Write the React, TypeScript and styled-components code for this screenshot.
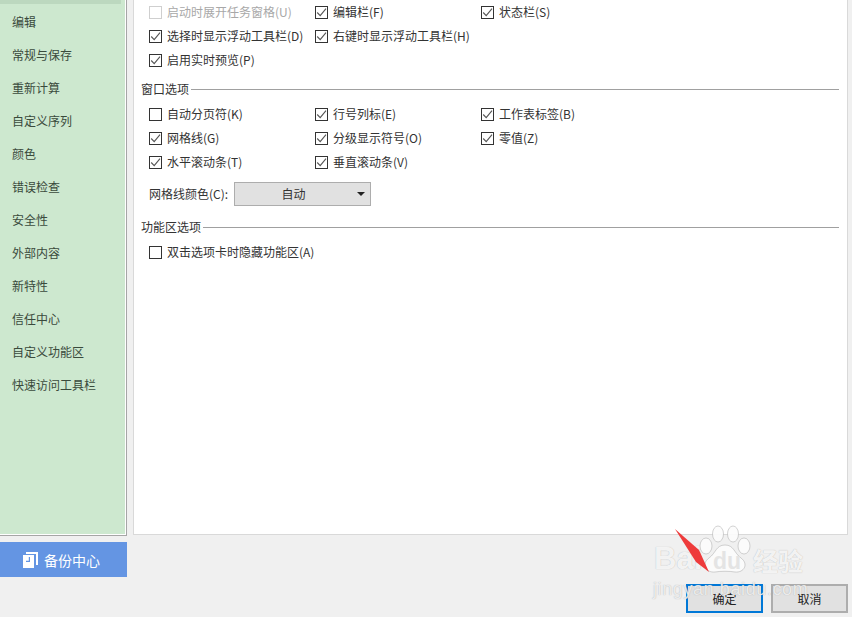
import React from "react";
import styled, { createGlobalStyle } from "styled-components";

const Global = createGlobalStyle`
  html, body { margin: 0; padding: 0; background: #f0f0f0; }
  body { font-family: "Noto Sans CJK SC", "Liberation Sans", sans-serif; font-size: 12px; line-height: 16px; color: #333; }
`;

const Page = styled.div`
  position: relative;
  width: 852px;
  height: 617px;
  overflow: hidden;
  display: flex;
  flex-direction: column;
`;
const Top = styled.div`
  display: flex;
  height: 536px;
  gap: 6px;
  padding-right: 4px;
`;
const Sidebar = styled.nav`
  box-sizing: border-box;
  width: 127px;
  background: #cde8cf;
  border-right: 1px solid #a6a6a6;
  border-bottom: 1px solid #a6a6a6;
  box-shadow: inset -1px -1px 0 #fff;
  display: flex;
  flex-direction: column;
`;
const ActiveStub = styled.div`
  height: 4px;
  margin: 0 5px 1px 0;
  background: #bcd8bf;
`;
const NavItem = styled.div`
  height: 33px;
  line-height: 33px;
  padding-left: 12px;
  color: #3a4a3c;
`;
const Main = styled.main`
  flex: 1;
  box-sizing: border-box;
  height: 535px;
  background: #fff;
  border: 1px solid #d9d9d9;
  border-top: 0;
  padding: 0 8px 0 7px;
`;
const Row = styled.div`
  display: grid;
  grid-template-columns: repeat(3, 166px);
  height: 24px;
  padding-left: 8px;
  align-items: center;
`;
const CheckLabel = styled.label<{ $disabled?: boolean }>`
  display: flex;
  align-items: center;
  gap: 5px;
  white-space: nowrap;
  color: ${(p) => (p.$disabled ? "#a8a8a8" : "#333")};
`;
const Box = styled.span<{ $disabled?: boolean }>`
  box-sizing: border-box;
  width: 13px;
  height: 13px;
  flex: none;
  background: #fff;
  border: 1px solid ${(p) => (p.$disabled ? "#cfcfcf" : "#333")};
  display: flex;
`;
const Section = styled.div<{ $top: number }>`
  display: flex;
  align-items: center;
  gap: 2px;
  height: 18px;
  margin-top: ${(p) => p.$top}px;
  margin-bottom: 4px;
  white-space: nowrap;
  &::after {
    content: "";
    flex: 1;
    height: 1px;
    background: #a0a0a0;
  }
`;
const ColorRow = styled.div`
  display: flex;
  align-items: center;
  gap: 6px;
  height: 24px;
  padding-left: 8px;
  margin-top: 8px;
`;
const Select = styled.div`
  position: relative;
  box-sizing: border-box;
  width: 137px;
  height: 24px;
  line-height: 22px;
  text-align: center;
  background: #e1e1e1;
  border: 1px solid #adadad;
  padding-right: 18px;
  &::after {
    content: "";
    position: absolute;
    right: 5px;
    top: 9px;
    border-left: 4px solid transparent;
    border-right: 4px solid transparent;
    border-top: 4px solid #222;
  }
`;
const Bottom = styled.div`
  position: relative;
  flex: 1;
  display: flex;
  justify-content: space-between;
  align-items: flex-start;
  padding: 6px 4px 0 0;
`;
const Backup = styled.div`
  width: 127px;
  height: 35px;
  background: #6495e3;
  color: #fff;
  font-size: 14px;
  display: flex;
  align-items: center;
  gap: 6px;
  padding-left: 23px;
  box-sizing: border-box;
`;
const Buttons = styled.div`
  display: flex;
  gap: 8px;
  margin-top: 42px;
`;
const Button = styled.div<{ $primary?: boolean }>`
  box-sizing: border-box;
  width: 77px;
  height: 29px;
  line-height: 25px;
  text-align: center;
  background: #e1e1e1;
  color: #222;
  border: 2px solid ${(p) => (p.$primary ? "#0078d7" : "#adadad")};
`;
const Watermark = styled.div`
  position: absolute;
  left: 650px;
  top: 524px;
  width: 170px;
  height: 80px;
  pointer-events: none;
  font-family: "Liberation Sans", sans-serif;
`;
const WmBaidu = styled.span`
  position: absolute;
  left: 4px;
  top: 17px;
  font-size: 31px;
  font-weight: 700;
  line-height: 36px;
  color: rgba(252, 252, 252, 0.9);
  text-shadow: 0 0 1px rgba(160, 160, 160, 0.8);
`;
const WmDu = styled.span`
  position: absolute;
  left: 63px;
  top: 24px;
  font-size: 23px;
  font-weight: 700;
  line-height: 26px;
  color: #e4e4e4;
`;
const WmCn = styled.span`
  position: absolute;
  left: 103px;
  top: 20px;
  font-family: "Noto Sans CJK SC", sans-serif;
  font-size: 25px;
  line-height: 32px;
  font-weight: 700;
  color: rgba(252, 252, 252, 0.9);
  text-shadow: 0 0 1px rgba(160, 160, 160, 0.8);
`;
const WmUrl = styled.span`
  position: absolute;
  left: 3px;
  top: 53px;
  font-size: 18px;
  line-height: 24px;
  letter-spacing: 0.6px;
  white-space: nowrap;
  color: rgba(252, 252, 252, 0.8);
  text-shadow: 0 0 1px rgba(150, 150, 150, 0.8);
`;
const Overlay = styled.svg`
  position: absolute;
  left: 0;
  top: 0;
  pointer-events: none;
`;

const Tick = () => (
  <svg width="11" height="11" viewBox="0 0 11 11" fill="none">
    <path d="M1.2 5.5 L4.2 8.6 L10 1.6" stroke="#555" strokeWidth="1.1" />
  </svg>
);

const Check = ({ text, on = true, disabled }: { text: string; on?: boolean; disabled?: boolean }) => (
  <CheckLabel $disabled={disabled}>
    <Box $disabled={disabled}>{on && <Tick />}</Box>
    {text}
  </CheckLabel>
);

const nav = ["编辑", "常规与保存", "重新计算", "自定义序列", "颜色", "错误检查", "安全性", "外部内容", "新特性", "信任中心", "自定义功能区", "快速访问工具栏"];

export default function App() {
  return (
    <Page>
      <Global />
      <Top>
        <Sidebar>
          <ActiveStub />
          {nav.map((n) => (
            <NavItem key={n}>{n}</NavItem>
          ))}
        </Sidebar>
        <Main>
          <Row>
            <Check text="启动时展开任务窗格(U)" on={false} disabled />
            <Check text="编辑栏(F)" />
            <Check text="状态栏(S)" />
          </Row>
          <Row>
            <Check text="选择时显示浮动工具栏(D)" />
            <Check text="右键时显示浮动工具栏(H)" />
          </Row>
          <Row>
            <Check text="启用实时预览(P)" />
          </Row>
          <Section $top={8}>窗口选项</Section>
          <Row>
            <Check text="自动分页符(K)" on={false} />
            <Check text="行号列标(E)" />
            <Check text="工作表标签(B)" />
          </Row>
          <Row>
            <Check text="网格线(G)" />
            <Check text="分级显示符号(O)" />
            <Check text="零值(Z)" />
          </Row>
          <Row>
            <Check text="水平滚动条(T)" />
            <Check text="垂直滚动条(V)" />
          </Row>
          <ColorRow>
            网格线颜色(C):
            <Select>自动</Select>
          </ColorRow>
          <Section $top={12}>功能区选项</Section>
          <Row>
            <Check text="双击选项卡时隐藏功能区(A)" on={false} />
          </Row>
        </Main>
      </Top>
      <Bottom>
        <Backup>
          <svg width="15" height="16" viewBox="0 0 15 16">
            <path d="M3 0H15V13H13V2H3Z" fill="#fff" />
            <path d="M0 3H11V16H0Z" fill="#fff" />
            <path d="M7 5V10H3V8.8H5.8V5Z" fill="#6495e3" />
          </svg>
          备份中心
        </Backup>
        <Buttons>
          <Button $primary>确定</Button>
          <Button>取消</Button>
        </Buttons>
      </Bottom>
      <Watermark>
        <WmBaidu>Bai</WmBaidu>
        <svg
          width="54"
          height="52"
          viewBox="0 0 54 52"
          style={{ position: "absolute", left: 48, top: 1 }}
        >
          <g fill="rgba(252,252,252,0.92)" stroke="rgba(165,165,165,0.7)" strokeWidth="0.7">
            <ellipse cx="8" cy="21" rx="6" ry="8" />
            <ellipse cx="20" cy="9" rx="5.5" ry="8" />
            <ellipse cx="35" cy="9" rx="5.5" ry="8" />
            <ellipse cx="46" cy="21" rx="6" ry="8" />
            <path d="M27 20C36 20 36 28 43 33C51 39 46 48 37 47C31 46 23 46 17 47C8 48 3 39 11 33C18 28 18 20 27 20Z" />
          </g>
        </svg>
        <WmDu>du</WmDu>
        <WmCn>经验</WmCn>
        <WmUrl>jingyan.baidu.com</WmUrl>
      </Watermark>
      <Overlay width="852" height="617" viewBox="0 0 852 617">
        <path d="M675 529L699 550L709 572L696 562Z" fill="#ee3b3b" />
      </Overlay>
    </Page>
  );
}
